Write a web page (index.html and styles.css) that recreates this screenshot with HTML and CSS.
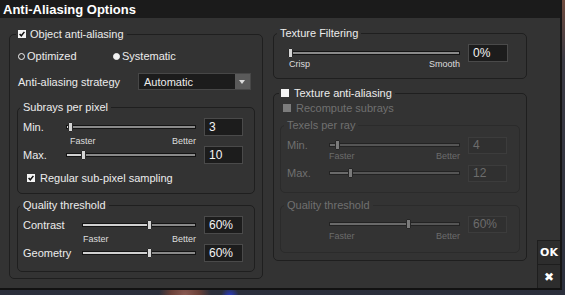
FILE: index.html
```html
<!DOCTYPE html>
<html>
<head>
    <title>Anti-Aliasing Options</title>
    <link rel="stylesheet" href="styles.css">
</head>
<body>
    <div class="dialog">
        <div class="titlebar">Anti-Aliasing Options</div>
        <div class="dialog-body">

            <!-- left column -->
            <fieldset class="group object-aa">
                <legend>
                    <svg class="check" viewBox="0 0 8 8"><rect width="8" height="8" fill="#f4f4f4"/><path d="M1.6 3.9 L3.3 5.8 L6.4 1.9" stroke="#111" stroke-width="1.5" fill="none"/></svg>
                    Object anti-aliasing
                </legend>
                <div class="radios">
                    <span class="radio"><span class="dot"></span>Optimized</span>
                    <span class="radio"><span class="dot filled"></span>Systematic</span>
                </div>
                <div class="strategy">
                    <span class="strategy-label">Anti-aliasing strategy</span>
                    <div class="select">
                        <span>Automatic</span>
                        <span class="arrow"></span>
                    </div>
                </div>

                <fieldset class="group subrays">
                    <legend>Subrays per pixel</legend>
                    <div class="slider-row">
                        <span>Min.</span>
                        <div class="slider" style="--p:3%"><div class="track"></div><div class="handle"></div></div>
                        <div class="field">3</div>
                    </div>
                    <div class="scale">
                        <span class="scale-text"><span>Faster</span><span>Better</span></span>
                    </div>
                    <div class="slider-row">
                        <span>Max.</span>
                        <div class="slider" style="--p:13%"><div class="track"></div><div class="handle"></div></div>
                        <div class="field">10</div>
                    </div>
                    <div class="option">
                        <svg class="check" viewBox="0 0 8 8"><rect width="8" height="8" fill="#f4f4f4"/><path d="M1.6 3.9 L3.3 5.8 L6.4 1.9" stroke="#111" stroke-width="1.5" fill="none"/></svg>
                        Regular sub-pixel sampling
                    </div>
                </fieldset>

                <fieldset class="group quality">
                    <legend>Quality threshold</legend>
                    <div class="slider-row">
                        <span>Contrast</span>
                        <div class="slider" style="--p:59%"><div class="track"></div><div class="handle"></div></div>
                        <div class="field">60%</div>
                    </div>
                    <div class="scale">
                        <span class="scale-text"><span>Faster</span><span>Better</span></span>
                    </div>
                    <div class="slider-row">
                        <span>Geometry</span>
                        <div class="slider" style="--p:59%"><div class="track"></div><div class="handle"></div></div>
                        <div class="field">60%</div>
                    </div>
                </fieldset>
            </fieldset>

            <!-- right column -->
            <div class="right-col">
                <fieldset class="group filtering">
                    <legend>Texture Filtering</legend>
                    <div class="slider-row">
                        <div class="slider" style="--p:1%"><div class="track"></div><div class="handle"></div></div>
                        <div class="field">0%</div>
                    </div>
                    <div class="scale">
                        <span class="scale-text"><span>Crisp</span><span>Smooth</span></span>
                    </div>
                </fieldset>

                <fieldset class="group texture-aa">
                    <legend>
                        <svg class="check" viewBox="0 0 8 8"><rect width="8" height="8" fill="#f4f4f4"/></svg>
                        Texture anti-aliasing
                    </legend>
                    <div class="option disabled">
                        <svg class="check" viewBox="0 0 8 8"><rect width="8" height="8" fill="#7c7c7c"/></svg>
                        Recompute subrays
                    </div>

                    <fieldset class="group texels disabled">
                        <legend>Texels per ray</legend>
                        <div class="slider-row">
                            <span>Min.</span>
                            <div class="slider" style="--p:6%"><div class="track"></div><div class="handle"></div></div>
                            <div class="field">4</div>
                        </div>
                        <div class="scale">
                            <span class="scale-text"><span>Faster</span><span>Better</span></span>
                        </div>
                        <div class="slider-row">
                            <span>Max.</span>
                            <div class="slider" style="--p:16%"><div class="track"></div><div class="handle"></div></div>
                            <div class="field">12</div>
                        </div>
                    </fieldset>

                    <fieldset class="group texels tex-quality disabled">
                        <legend>Quality threshold</legend>
                        <div class="slider-row">
                            <span></span>
                            <div class="slider" style="--p:60%"><div class="track"></div><div class="handle"></div></div>
                            <div class="field">60%</div>
                        </div>
                        <div class="scale">
                            <span class="scale-text"><span>Faster</span><span>Better</span></span>
                        </div>
                    </fieldset>
                </fieldset>
            </div>

            <div class="actions">
                <button class="btn ok">OK</button>
                <button class="btn cancel">&#10006;</button>
            </div>
        </div>
    </div>
</body>
</html>
```

FILE: styles.css
```css
body {
    margin: 0;
    width: 565px;
    height: 295px;
    overflow: hidden;
    font-family: "Liberation Sans", Arial, sans-serif;
    font-size: 11px;
    color: #ececec;
    background:
        radial-gradient(circle at 185px 295px, #8a5a52 0, #6a4038 14px, transparent 26px),
        radial-gradient(circle at 230px 296px, #2a3cc8 0, transparent 9px),
        linear-gradient(to bottom, #6e4a3d 0, #3b3a44 60px, #2b2f3c 100%);
}
.dialog {
    width: 560px;
    height: 288px;
    display: flex;
    flex-direction: column;
    background: #333333;
    border-right: 2px solid #161616;
    border-bottom: 2px solid #121212;
}
.titlebar {
    height: 18px;
    line-height: 19px;
    padding-left: 3px;
    background: #1b1b1b;
    color: #ffffff;
    font-weight: bold;
    font-size: 13px;
}
.dialog-body {
    flex: 1;
    display: flex;
    align-items: flex-start;
}

/* group boxes */
.group {
    margin: 0;
    border: 1px solid #1f1f1f;
    border-radius: 5px;
    min-width: 0;
}
.group legend {
    line-height: 14px;
    height: 14px;
    padding: 0 3px;
    margin-left: -3px;
    display: flex;
    align-items: center;
}
.check {
    width: 8px;
    height: 8px;
    flex: none;
    margin-right: 4px;
}
.object-aa {
    width: 254px;
    box-sizing: border-box;
    margin: 9px 0 0 9px;
    padding: 7px 7px 6px 6px;
}
.object-aa > legend {
    margin-left: 0;
    padding: 0 3px 0 2px;
}
.radios {
    display: flex;
    height: 16px;
    align-items: center;
    padding-left: 2px;
}
.radio {
    display: flex;
    align-items: center;
}
.radio:first-child {
    width: 95px;
}
.dot {
    width: 5px;
    height: 5px;
    border: 1px solid #f2f2f2;
    border-radius: 50%;
    margin-right: 2px;
}
.dot.filled {
    background: #f2f2f2;
}
.strategy {
    display: flex;
    align-items: center;
    height: 17px;
    margin-top: 9px;
    padding-left: 2px;
}
.strategy-label {
    width: 120px;
}
.select {
    width: 113px;
    height: 17px;
    box-sizing: border-box;
    display: flex;
    align-items: center;
    justify-content: space-between;
    background: #1c1c1c;
    border: 1px solid #474747;
    padding-left: 5px;
}
.arrow {
    width: 15px;
    height: 15px;
    background: #5a5a5a;
    position: relative;
}
.arrow::after {
    content: "";
    position: absolute;
    left: 4px;
    top: 6px;
    border-left: 3.5px solid transparent;
    border-right: 3.5px solid transparent;
    border-top: 4px solid #dcdcdc;
}

/* slider rows */
.slider-row,
.scale {
    display: grid;
    column-gap: 8px;
    align-items: center;
}
.slider-row {
    height: 18px;
}
.scale {
    height: 10px;
    font-size: 9px;
    line-height: 10px;
    color: #dedede;
}
.scale-text {
    grid-column: 2;
    display: flex;
    justify-content: space-between;
}
.slider {
    position: relative;
    padding: 3px 0;
}
.track {
    height: 4px;
    box-sizing: border-box;
    border: 1px solid #141414;
    background: linear-gradient(to right, #d0d0d0 var(--p), #8a8a8a var(--p));
}
.handle {
    position: absolute;
    left: var(--p);
    top: 0;
    width: 5px;
    height: 10px;
    box-sizing: border-box;
    margin-left: -2px;
    background: #d6d6d6;
    border: 1px solid #2a2a2a;
    border-radius: 1px;
}
.field {
    height: 18px;
    box-sizing: border-box;
    background: #1c1c1c;
    border: 1px solid #4a4a4a;
    padding-left: 4px;
    font-size: 12px;
    line-height: 16px;
    color: #f4f4f4;
}

.subrays {
    margin: 10px 0 0 1px;
    width: 238px;
    box-sizing: border-box;
    padding: 4px 11px 8px 5px;
}
.subrays .slider-row,
.subrays .scale {
    grid-template-columns: 35px 130px 39px;
}
.subrays .scale-text {
    padding-left: 4px;
}
.option {
    display: flex;
    align-items: center;
    height: 14px;
    margin-top: 7px;
    padding-left: 4px;
}
.option .check {
    margin-right: 5px;
}
.quality {
    margin: 4px 0 0 1px;
    width: 238px;
    box-sizing: border-box;
    padding: 4px 11px 9px 5px;
}
.quality .slider-row,
.quality .scale {
    grid-template-columns: 51px 114px 39px;
}
.quality .scale-text {
    padding-left: 1px;
}

/* right column */
.right-col {
    width: 254px;
    margin: 8px 0 0 10px;
}
.filtering {
    padding: 4px 18px 9px 14px;
}
.filtering > legend {
    margin-left: -11px;
}
.filtering .slider-row,
.filtering .scale {
    grid-template-columns: 172px 40px;
}
.filtering .scale-text {
    grid-column: 1;
    padding-left: 1px;
}
.filtering .scale {
    margin-top: -3px;
}
.texture-aa {
    margin-top: 7px;
    padding: 1px 6px 7px 6px;
}
.texture-aa > legend {
    margin-left: -1px;
    padding: 0 3px 0 2px;
}
.texture-aa > legend .check {
    margin-right: 5px;
}
.texture-aa > .option {
    margin-top: 0;
    padding-left: 3px;
}
.disabled {
    color: #707070;
}
.texels {
    margin-top: 3px;
    border-color: #2b2b2b;
    padding: 4px 6px 10px 6px;
}
.texels .slider-row,
.texels .scale {
    grid-template-columns: 34px 131px 39px;
}
.texels .scale {
    margin-top: -3px;
    color: #6c6c6c;
}
.texels .slider-row + .scale + .slider-row {
    margin-top: 3px;
}
.tex-quality {
    margin-top: 5px;
    padding: 3px 6px 11px 6px;
}
.tex-quality .scale {
    margin-top: -2px;
}
.disabled .field {
    height: 17px;
    background: #303030;
    border-color: #3c3c3c;
    color: #6c6c6c;
    line-height: 15px;
}
.disabled .track {
    border-color: #232323;
    background: linear-gradient(to right, #6a6a6a var(--p), #555555 var(--p));
}
.disabled .handle {
    background: #7a7a7a;
    border-color: #262626;
}

/* ok / cancel */
.actions {
    align-self: flex-end;
    margin-left: 10px;
    width: 23px;
    display: flex;
    flex-direction: column;
}
.btn {
    height: 24px;
    padding: 0;
    border: none;
    border-left: 1px solid #1e1e1e;
    border-top: 1px solid #1e1e1e;
    background: #2d2d2d;
    color: #ffffff;
    font-family: "DejaVu Sans", sans-serif;
    font-weight: bold;
    font-size: 11px;
    cursor: pointer;
}
.cancel {
    font-size: 12px;
}
```
